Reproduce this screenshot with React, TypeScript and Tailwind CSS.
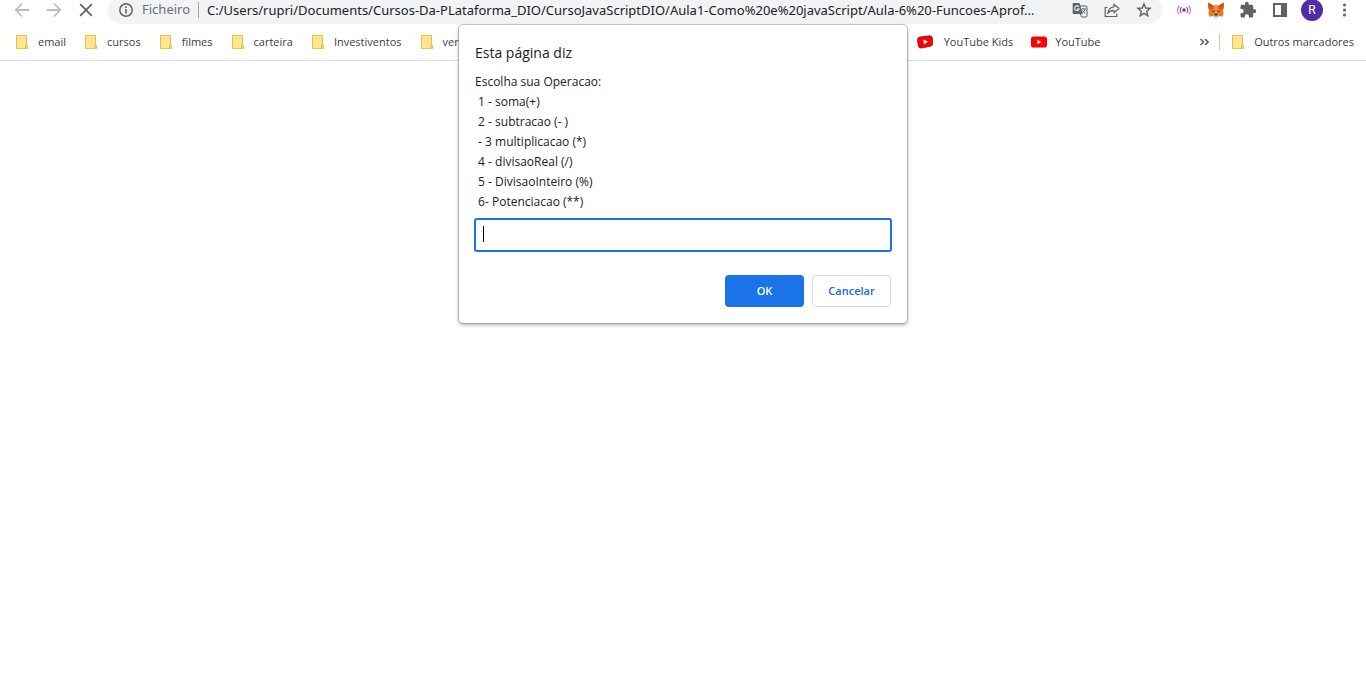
import React from "react";

const iconButton = "flex h-7 w-8 shrink-0 items-center justify-center";

function FolderIcon() {
  return (
    <svg width="16" height="16" viewBox="0 0 16 16" aria-hidden="true">
      <path d="M2.5 1.5h10v10h1v3h-11z" fill="#ffe694" stroke="#e9c33f" />
      <path d="M11.5 14.5v-3.5h1.5v3.5z" fill="#ffe694" stroke="#e9c33f" />
    </svg>
  );
}

function YouTubeIcon() {
  return (
    <svg width="16" height="16" viewBox="0 0 16 16" aria-hidden="true">
      <rect x="0" y="2.5" width="16" height="11" rx="2.6" fill="#f00" />
      <path d="M6.4 5.7v4.6l4-2.3z" fill="#fff" />
    </svg>
  );
}

function YouTubeKidsIcon() {
  return (
    <svg width="19" height="16" viewBox="0 0 19 16" aria-hidden="true">
      <path
        d="M2.6 3.1 12.7 1.8q2.2-.1 2.6 2l.4 5.3q0 2.6-2.1 3.1L4.2 14.1q-2.2.2-2.8-1.9L.4 6q-.2-2.4 2.2-2.9z"
        fill="#f00"
        stroke="#8a1512"
        strokeWidth=".8"
      />
      <path d="M6.3 5.6 7 10.5 11 7.4z" fill="#fff" />
    </svg>
  );
}

function Bookmark({ label, icon }: { label: string; icon?: React.ReactNode }) {
  return (
    <a href="#" className="flex shrink-0 items-center gap-2 whitespace-nowrap">
      {icon ?? <FolderIcon />}
      <span>{label}</span>
    </a>
  );
}

function Toolbar() {
  return (
    <div className="h-6 overflow-hidden">
      <div className="-mt-1 flex h-7 items-center px-1.5 text-[#5f6368]">
        <button className={iconButton} aria-label="Retroceder">
          <svg width="16" height="16" viewBox="0 0 16 16" fill="none" stroke="#babcbe" strokeWidth="1.8">
            <path d="M15 8H2.3M8 1.5 1.8 8 8 14.5" />
          </svg>
        </button>
        <button className={iconButton} aria-label="Avançar">
          <svg width="16" height="16" viewBox="0 0 16 16" fill="none" stroke="#babcbe" strokeWidth="1.8">
            <path d="M1 8h12.7M8 1.5 14.2 8 8 14.5" />
          </svg>
        </button>
        <button className={iconButton} aria-label="Parar">
          <svg width="16" height="16" viewBox="0 0 16 16" fill="none" stroke="#5f6368" strokeWidth="1.8">
            <path d="M2.2 2.2 13.8 13.8M13.8 2.2 2.2 13.8" />
          </svg>
        </button>
        <div className="ml-1.5 flex h-7 min-w-0 flex-1 items-center rounded-full bg-[#f1f3f4] pr-0.5 pl-2.5 font-['Noto_Sans',sans-serif] text-[13px]">
          <svg className="shrink-0" width="16" height="16" viewBox="0 0 16 16" fill="none" aria-hidden="true">
            <circle cx="8" cy="8" r="6.2" stroke="#5f6368" strokeWidth="1.5" />
            <path d="M8 7v4.5M8 4.3v1.7" stroke="#5f6368" strokeWidth="1.6" />
          </svg>
          <span className="ml-2 shrink-0 text-[#6b6f73]">Ficheiro</span>
          <span className="ml-2 h-4 w-px shrink-0 bg-[#a5a8ab]" />
          <input
            aria-label="Endereço"
            readOnly
            className="ml-2 h-6 min-w-0 flex-1 bg-transparent text-ellipsis text-[#202124] outline-none"
            value="C:/Users/rupri/Documents/Cursos-Da-PLataforma_DIO/CursoJavaScriptDIO/Aula1-Como%20e%20javaScript/Aula-6%20-Funcoes-Aprof..."
          />
          <button className={iconButton} aria-label="Traduzir esta página">
            <svg width="16" height="16" viewBox="0 0 16 16">
              <path d="M6 4h8q1 0 1 1v9q0 1-1 1H9.5z" fill="#f1f3f4" stroke="#5f6368" />
              <path d="M1.5 1H7.5L10.8 12H1.5Q.7 12 .7 11.2V1.8Q.7 1 1.5 1z" fill="#5f6368" />
              <path d="M7 5.1A2.3 2.3 0 1 0 7.1 7H5" fill="none" stroke="#f1f3f4" strokeWidth="1.1" />
              <path d="M9.5 7H14M11.7 6v1M13.2 7q-.7 2.6-3 4.2M10.4 8.2q1 2 3 3.4" fill="none" stroke="#5f6368" strokeWidth=".9" />
            </svg>
          </button>
          <button className={iconButton} aria-label="Partilhar">
            <svg width="16" height="16" viewBox="0 0 16 16" fill="none" stroke="#5f6368" strokeWidth="1.2">
              <path d="M3.5 5.5H1.2V14.5H12.8V11.5" />
              <path d="M10 2.2 15 6.5 10 10.8V8.3Q6 8.2 3.8 11.3 4.5 5.4 10 4.8z" strokeLinejoin="round" />
            </svg>
          </button>
          <button className={iconButton} aria-label="Adicionar aos marcadores">
            <svg width="16" height="16" viewBox="0 0 16 16" fill="none" stroke="#5f6368" strokeWidth="1.4">
              <path d="M8 1.9 9.7 6 14.1 6.4 10.8 9.3 11.8 13.7 8 11.4 4.2 13.7 5.2 9.3 1.9 6.4 6.3 6z" />
            </svg>
          </button>
        </div>
        <div className="ml-1.5 flex items-center">
          <button className={iconButton} aria-label="Transmissão">
            <svg width="16" height="16" viewBox="0 0 16 16" fill="none">
              <circle cx="8" cy="8" r="1.7" fill="#8e24aa" />
              <path d="M5.4 5.2Q3.2 8 5.4 10.8M10.6 5.2Q12.8 8 10.6 10.8" stroke="#a340bd" strokeWidth="1.2" />
              <path d="M3.2 3.7Q-.2 8 3.2 12.3M12.8 3.7Q16.2 8 12.8 12.3" stroke="#c27bd3" strokeWidth="1.2" />
            </svg>
          </button>
          <button className={iconButton} aria-label="MetaMask">
            <svg width="16" height="16" viewBox="0 0 16 16">
              <path d="M.4.6 6 3.5h4L15.6.6 15.9 4l-1 4.5.8 2.2-1.2 4-3.5-.8L9.5 15.4h-3L5 13.9l-3.5.8-1.2-4 .8-2.2L.1 4z" fill="#f0791f" />
              <path d="M.4.6 6 4.5 4.8 7 1 7.8.1 4zM15.6.6 10 4.5 11.2 7l3.8.8.9-3.8z" fill="#bd5b22" />
              <path d="M6 3.5h4L9.3 10.5H6.7z" fill="#f58c32" />
              <path d="M4.5 8.3 7 9.7 4.6 10zM11.5 8.3 9 9.7l2.4.3z" fill="#233447" />
              <path d="M5 13.4 6.7 12h2.6l1.7 1.4-1.5 1.9h-3z" fill="#c9b7a8" />
              <path d="M6.7 11.7h2.6l.3 1.8H6.4z" fill="#233447" />
            </svg>
          </button>
          <button className={iconButton} aria-label="Extensões">
            <svg width="18" height="18" viewBox="0 0 24 24" fill="#5f6368">
              <path d="M20.5 11H19V7c0-1.1-.9-2-2-2h-4V3.5a2.5 2.5 0 0 0-5 0V5H4c-1.1 0-2 .9-2 2v3.8h1.5c1.5 0 2.7 1.2 2.7 2.7S5 16.2 3.5 16.2H2V20c0 1.1.9 2 2 2h3.8v-1.5c0-1.5 1.2-2.7 2.7-2.7s2.7 1.2 2.7 2.7V22H17c1.1 0 2-.9 2-2v-4h1.5a2.5 2.5 0 0 0 0-5z" />
            </svg>
          </button>
          <button className={iconButton} aria-label="Painel lateral">
            <svg width="16" height="16" viewBox="0 0 16 16">
              <path d="M1 1h14v14H1zM3 3v10h6V3z" fill="#5f6368" fillRule="evenodd" />
            </svg>
          </button>
          <button className={iconButton} aria-label="Perfil">
            <span className="flex size-[22px] items-center justify-center rounded-full bg-[#512da8] font-['Roboto',sans-serif] text-xs text-white">
              R
            </span>
          </button>
          <button className={iconButton} aria-label="Menu">
            <svg width="16" height="16" viewBox="0 0 16 16" fill="#5f6368">
              <circle cx="8.5" cy="3" r="1.6" />
              <circle cx="8.5" cy="8" r="1.6" />
              <circle cx="8.5" cy="13" r="1.6" />
            </svg>
          </button>
        </div>
      </div>
    </div>
  );
}

function BookmarksBar() {
  return (
    <nav className="flex h-[37px] items-center border-b border-[#dadce0] text-[11px] text-[#3c4043]">
      <div className="flex w-2/3 shrink-0 gap-[17px] overflow-hidden pl-3.5">
        {["email", "cursos", "filmes", "carteira", "Investiventos", "ver"].map((label) => (
          <Bookmark key={label} label={label} />
        ))}
      </div>
      <div className="flex flex-1 items-center gap-[18px] pl-1.5">
        <Bookmark label="YouTube Kids" icon={<YouTubeKidsIcon />} />
        <Bookmark label="YouTube" icon={<YouTubeIcon />} />
      </div>
      <div className="flex items-center gap-2.5 pr-3">
        <button aria-label="Mais marcadores">
          <svg width="10" height="10" viewBox="0 0 10 10" fill="none" stroke="#5f6368" strokeWidth="1.6">
            <path d="M1.5 2l3 3-3 3M6 2l3 3-3 3" />
          </svg>
        </button>
        <span className="h-4 w-px bg-[#c4c7ca]" />
        <Bookmark label="Outros marcadores" />
      </div>
    </nav>
  );
}

const message = `Escolha sua Operacao:
 1 - soma(+)
 2 - subtracao (- )
 - 3 multiplicacao (*)
 4 - divisaoReal (/)
 5 - DivisaoInteiro (%)
 6- Potenciacao (**)`;

function PromptDialog() {
  return (
    <form
      role="dialog"
      aria-labelledby="prompt-title"
      onSubmit={(e) => e.preventDefault()}
      className="absolute top-[25px] left-1/2 w-md -translate-x-1/2 rounded bg-white p-4 text-xs text-[#202124] shadow-[0_0_0_1px_rgba(0,0,0,0.2),0_2px_4px_rgba(0,0,0,0.3)]"
    >
      <h1 id="prompt-title" className="text-sm leading-6">
        Esta página diz
      </h1>
      <label htmlFor="prompt-value" className="mt-[7px] block leading-5 whitespace-pre">
        {message}
      </label>
      <div className="relative mt-[7px]">
        <input
          id="prompt-value"
          type="text"
          className="block h-8 w-full rounded-xs bg-white px-2 caret-transparent outline-2 -outline-offset-1 outline-[#1a73e8]"
        />
        <span className="pointer-events-none absolute top-[7px] left-2 h-4 w-px bg-black" />
      </div>
      <div className="mt-6 flex justify-end gap-2 text-[11px] font-semibold">
        <button type="submit" className="h-8 w-[79px] rounded bg-[#1a73e8] text-white">
          OK
        </button>
        <button type="button" className="h-8 w-[79px] rounded border border-[#dadce0] text-[#1a66d8]">
          Cancelar
        </button>
      </div>
    </form>
  );
}

export default function App() {
  return (
    <div className="relative min-h-screen bg-white font-['Open_Sans','Noto_Sans',sans-serif]">
      <Toolbar />
      <BookmarksBar />
      <PromptDialog />
    </div>
  );
}
